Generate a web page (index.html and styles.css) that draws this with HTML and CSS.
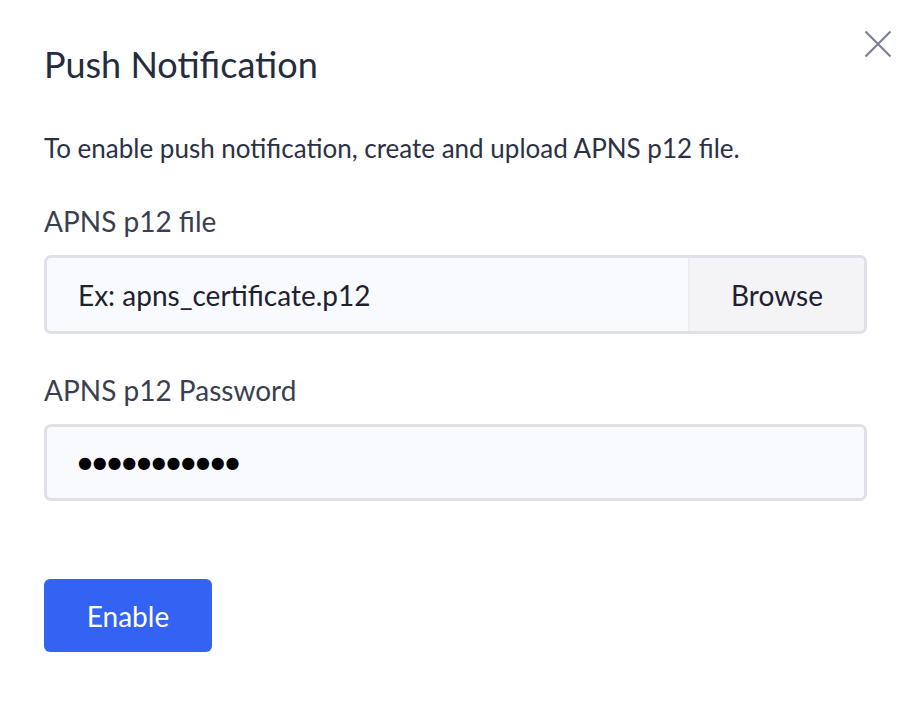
FILE: index.html
```html
<!DOCTYPE html>
<html lang="en">
<head>
<meta charset="utf-8">
<title>Push Notification</title>
<link rel="stylesheet" href="styles.css">
</head>
<body>
<div class="modal">
  <div class="header">
    <h1 class="title">Push Notification</h1>
    <button class="close" aria-label="Close">
      <svg width="28" height="28" viewBox="0 0 28 28"><path d="M1.5 1.5 L26.5 26.5 M26.5 1.5 L1.5 26.5" stroke="#7c8192" stroke-width="2.2" fill="none"/></svg>
    </button>
  </div>
  <p class="desc">To enable push notification, create and upload APNS p12 file.</p>
  <div class="field">
    <label class="label">APNS p12 file</label>
    <div class="input-group">
      <span class="input-text">Ex: apns_certificate.p12</span>
      <span class="browse">Browse</span>
    </div>
  </div>
  <div class="field">
    <label class="label">APNS p12 Password</label>
    <div class="input-box">
      <span class="dots">●●●●●●●●●●●</span>
    </div>
  </div>
  <button class="enable">Enable</button>
</div>
</body>
</html>
```

FILE: styles.css
```css
html, body {
  margin: 0;
  padding: 0;
  background: #ffffff;
}
body {
  font-family: Lato, "Open Sans", sans-serif;
  color: #2b3145;
}
.modal {
  width: 912px;
  height: 702px;
  box-sizing: border-box;
  padding: 0 45px 0 44px;
}
.header {
  display: flex;
  justify-content: space-between;
  align-items: flex-start;
  height: 112px;
}
.title {
  margin: 44px 0 0 0;
  font-size: 36px;
  font-weight: 400;
  line-height: 40px;
  color: #262c40;
}
.close {
  margin: 30px -25px 0 0;
  padding: 0;
  border: 0;
  background: none;
  width: 28px;
  height: 28px;
}
.desc {
  margin: 22px 0 0 0;
  font-size: 26px;
  line-height: 28px;
  color: #2b3145;
}
.field {
  margin-top: 45px;
}
.field + .field {
  margin-top: 42px;
}
.label {
  display: block;
  font-size: 28px;
  line-height: 28px;
  color: #3a3f50;
}
.input-group {
  margin-top: 20px;
  display: flex;
  height: 79px;
  box-sizing: border-box;
  border: 3px solid #dfe0e8;
  border-radius: 7px;
  background: #f9fafe;
  overflow: hidden;
}
.input-text {
  flex: 1;
  display: flex;
  align-items: center;
  padding-left: 31px;
  font-size: 28px;
  color: #1e2230;
}
.browse {
  width: 174px;
  display: flex;
  align-items: center;
  justify-content: center;
  background: #f4f4f6;
  border-left: 2px solid #eceef2;
  font-size: 28px;
  color: #1e2230;
}
.input-box {
  margin-top: 20px;
  height: 77px;
  box-sizing: border-box;
  border: 3px solid #dfe0e8;
  border-radius: 7px;
  background: #f9fafe;
  display: flex;
  align-items: center;
  padding-left: 31px;
}
.dots {
  font-family: "DejaVu Sans", sans-serif;
  font-size: 16px;
  letter-spacing: 0.8px;
  color: #000;
}
.enable {
  margin-top: 78px;
  width: 168px;
  height: 73px;
  border: 0;
  border-radius: 6px;
  background: #3462f2;
  color: #fff;
  font-family: Lato, "Open Sans", sans-serif;
  font-size: 28px;
  padding: 0;
}
```
